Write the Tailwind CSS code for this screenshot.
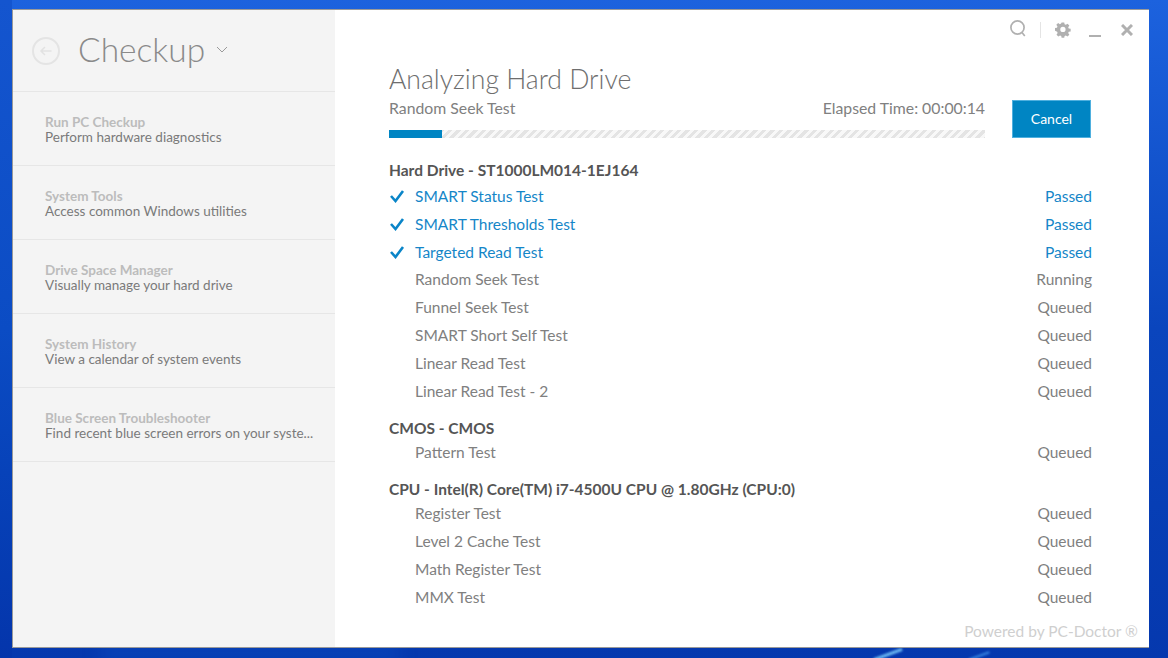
<!DOCTYPE html>
<html>
<head>
<meta charset="utf-8">
<script src="https://cdn.jsdelivr.net/npm/@tailwindcss/browser@4"></script>
</head>
<body class="m-0">
<div class="relative w-[1168px] h-[658px] overflow-hidden bg-gradient-to-b from-[#1c62de] via-[#0a45bd] to-[#0538ae] font-['Lato','Open_Sans',sans-serif]">
  <div class="absolute left-0 top-0 w-[12px] h-[658px] bg-gradient-to-b from-[#1455cf] via-[#0b4cc4] to-[#0435ab]"></div>
  <div class="absolute left-[100px] bottom-0 w-[300px] h-[10px] bg-[#0a49bd] blur-sm"></div>
  <div class="absolute left-[873px] bottom-[2px] w-[30px] h-[3px] bg-[#6fbdf5] -rotate-[20deg] blur-[1px]"></div>
  <div class="absolute left-[968px] bottom-[1px] w-[22px] h-[2px] bg-[#3c8ce8] -rotate-[20deg] blur-[1px]"></div>
  <div class="absolute left-[12px] top-[9px] w-[1137px] h-[639px] flex bg-white border-l border-t border-b border-[#9a9a9a]">
    <aside class="w-[322px] h-full bg-[#f4f4f4] shrink-0 flex flex-col">
      <div class="h-[82px] flex items-center pl-[19px] border-b border-[#e6e6e6] shrink-0">
        <div class="w-[28px] h-[28px] rounded-full border-2 border-[#e4e4e4] flex items-center justify-center">
          <svg width="14" height="14" viewBox="0 0 14 14" fill="none" stroke="#e2e2e2" stroke-width="1.5"><path d="M12.5 7H2M6 3L2 7l4 4"/></svg>
        </div>
        <span class="ml-[18px] mt-[-2px] text-[33.5px] leading-none text-[#8a8a8a] font-light">Checkup</span>
        <svg class="ml-[11px] mt-[-3px]" width="12" height="7" viewBox="0 0 12 7" fill="none" stroke="#9a9a9a" stroke-width="1"><path d="M1 1l5 5 5-5"/></svg>
      </div>
      <div class="h-[74px] shrink-0 pl-[32px] pt-[22px] border-b border-[#e6e6e6] text-[13.5px] leading-[16px]">
        <div class="font-bold text-[#bcbcbc]">Run PC Checkup</div><div class="mt-[-1px] text-[#7a7a7a]">Perform hardware diagnostics</div>
      </div>
      <div class="h-[74px] shrink-0 pl-[32px] pt-[22px] border-b border-[#e6e6e6] text-[13.5px] leading-[16px]">
        <div class="font-bold text-[#bcbcbc]">System Tools</div><div class="mt-[-1px] text-[#7a7a7a]">Access common Windows utilities</div>
      </div>
      <div class="h-[74px] shrink-0 pl-[32px] pt-[22px] border-b border-[#e6e6e6] text-[13.5px] leading-[16px]">
        <div class="font-bold text-[#bcbcbc]">Drive Space Manager</div><div class="mt-[-1px] text-[#7a7a7a]">Visually manage your hard drive</div>
      </div>
      <div class="h-[74px] shrink-0 pl-[32px] pt-[22px] border-b border-[#e6e6e6] text-[13.5px] leading-[16px]">
        <div class="font-bold text-[#bcbcbc]">System History</div><div class="mt-[-1px] text-[#7a7a7a]">View a calendar of system events</div>
      </div>
      <div class="h-[74px] shrink-0 pl-[32px] pt-[22px] border-b border-[#e6e6e6] text-[13.5px] leading-[16px]">
        <div class="font-bold text-[#bcbcbc]">Blue Screen Troubleshooter</div><div class="mt-[-1px] text-[#7a7a7a]">Find recent blue screen errors on your syste...</div>
      </div>
    </aside>
    <main class="relative flex-1 pl-[54px] pr-[57px] text-[#808080] text-[15.5px]">
      <div class="absolute right-[16px] top-[11px] flex items-center">
        <svg class="mt-[-2px]" width="18" height="18" viewBox="0 0 18 18" fill="none" stroke="#b0b0b0" stroke-width="1.7"><circle cx="8.5" cy="7.5" r="6.6"/><path d="M13 12.5l2.8 3.5"/></svg>
        <div class="w-px h-[16px] bg-[#e4e4e4] ml-[13px] mr-[13px]"></div>
        <svg width="18" height="18" viewBox="0 0 18 18"><path fill="#b0b0b0" fill-rule="evenodd" d="M7.5 1h3l.4 2.2 1.4.6 1.9-1.3 2.1 2.1-1.3 1.9.6 1.4 2.2.4v3l-2.2.4-.6 1.4 1.3 1.9-2.1 2.1-1.9-1.3-1.4.6-.4 2.2h-3l-.4-2.2-1.4-.6-1.9 1.3-2.1-2.1 1.3-1.9-.6-1.4L0 10.5v-3l2.2-.4.6-1.4-1.3-1.9 2.1-2.1 1.9 1.3 1.4-.6zM9 6a3 3 0 1 0 0 6 3 3 0 0 0 0-6z" transform="translate(1 .5) scale(.88)"/></svg>
        <div class="w-[12px] h-[2px] bg-[#b0b0b0] ml-[17px] mt-[11px]"></div>
        <svg class="ml-[20px]" width="12" height="12" viewBox="0 0 12 12" stroke="#b0b0b0" stroke-width="3"><path d="M1 1l10 10M11 1L1 11"/></svg>
      </div>
      <div class="h-[55px]"></div>
      <div class="text-[26.6px] leading-[28px] text-[#6e6e6e] font-light">Analyzing Hard Drive</div>
      <div class="flex">
        <div class="w-[596px]">
          <div class="flex justify-between leading-[20px] mt-[5px] text-[15.8px]"><span>Random Seek Test</span><span>Elapsed Time: 00:00:14</span></div>
          <div class="h-[8px] mt-[11.5px] bg-[repeating-linear-gradient(135deg,#e4e4e4_0,#e4e4e4_3px,#f8f8f8_3px,#f8f8f8_6px)]"><div class="h-full w-[53px] bg-[#0085c3]"></div></div>
        </div>
        <button class="ml-[27px] w-[79px] h-[38px] mt-[7px] pb-[2px] bg-[#0085c3] border border-[#4fb0df] text-white text-[14px]">Cancel</button>
      </div>
      <div class="mt-[21px] text-[15.5px] leading-[22px] font-bold text-[#555555]">Hard Drive - ST1000LM014-1EJ164</div>
      <div class="flex justify-between h-[27.9px] items-center mt-[1.5px] text-[#1586c8]"><span class="flex items-center"><svg class="w-[26px]" width="26" height="14" viewBox="0 0 26 14" fill="none" stroke="#0a85c8" stroke-width="2.6"><path d="M2 7l4.5 5L14 2"/></svg>SMART Status Test</span><span>Passed</span></div>
      <div class="flex justify-between h-[27.9px] items-center text-[#1586c8]"><span class="flex items-center"><svg class="w-[26px]" width="26" height="14" viewBox="0 0 26 14" fill="none" stroke="#0a85c8" stroke-width="2.6"><path d="M2 7l4.5 5L14 2"/></svg>SMART Thresholds Test</span><span>Passed</span></div>
      <div class="flex justify-between h-[27.9px] items-center text-[#1586c8]"><span class="flex items-center"><svg class="w-[26px]" width="26" height="14" viewBox="0 0 26 14" fill="none" stroke="#0a85c8" stroke-width="2.6"><path d="M2 7l4.5 5L14 2"/></svg>Targeted Read Test</span><span>Passed</span></div>
      <div class="flex justify-between h-[27.9px] items-center pl-[26px]"><span>Random Seek Test</span><span>Running</span></div>
      <div class="flex justify-between h-[27.9px] items-center pl-[26px]"><span>Funnel Seek Test</span><span>Queued</span></div>
      <div class="flex justify-between h-[27.9px] items-center pl-[26px]"><span>SMART Short Self Test</span><span>Queued</span></div>
      <div class="flex justify-between h-[27.9px] items-center pl-[26px]"><span>Linear Read Test</span><span>Queued</span></div>
      <div class="flex justify-between h-[27.9px] items-center pl-[26px]"><span>Linear Read Test - 2</span><span>Queued</span></div>
      <div class="mt-[11px] text-[15.5px] leading-[22px] font-bold text-[#555555]">CMOS - CMOS</div>
      <div class="flex justify-between h-[27.9px] items-center pl-[26px]"><span>Pattern Test</span><span>Queued</span></div>
      <div class="mt-[11px] text-[15.5px] leading-[22px] font-bold text-[#555555]">CPU - Intel(R) Core(TM) i7-4500U CPU @ 1.80GHz (CPU:0)</div>
      <div class="flex justify-between h-[27.9px] items-center pl-[26px]"><span>Register Test</span><span>Queued</span></div>
      <div class="flex justify-between h-[27.9px] items-center pl-[26px]"><span>Level 2 Cache Test</span><span>Queued</span></div>
      <div class="flex justify-between h-[27.9px] items-center pl-[26px]"><span>Math Register Test</span><span>Queued</span></div>
      <div class="flex justify-between h-[27.9px] items-center pl-[26px]"><span>MMX Test</span><span>Queued</span></div>
      <div class="absolute right-[11px] bottom-[4px] text-[#cfcfcf] text-[15.5px]">Powered by PC-Doctor ®</div>
    </main>
  </div>
</div>
</body>
</html>
